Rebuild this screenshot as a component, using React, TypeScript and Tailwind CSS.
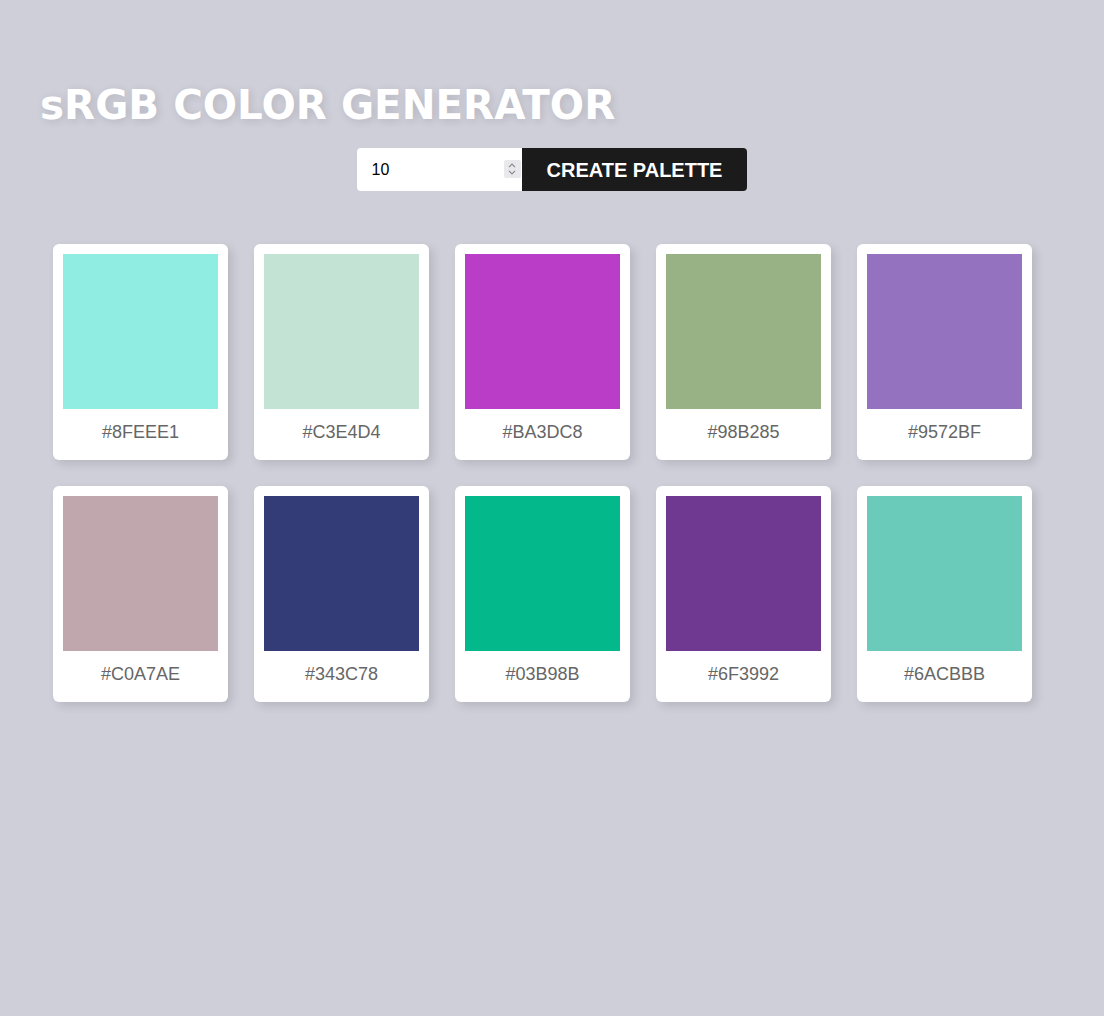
import React from 'react';

const colors = [
  '#8FEEE1',
  '#C3E4D4',
  '#BA3DC8',
  '#98B285',
  '#9572BF',
  '#C0A7AE',
  '#343C78',
  '#03B98B',
  '#6F3992',
  '#6ACBBB',
];

const ColorCard: React.FC<{ hex: string }> = ({ hex }) => (
  <div className="m-[13px] w-[175px] rounded-md bg-white px-[10px] pt-[10px] shadow-[4px_4px_10px_rgba(0,0,0,0.12)]">
    <div className="h-[155px] w-[155px]" style={{ backgroundColor: hex }} />
    <p className="h-[51px] pt-[12px] text-center text-[18px] leading-[22px] text-[#666]">{hex}</p>
  </div>
);

const App: React.FC = () => {
  return (
    <div className="min-h-[1016px] bg-[#cecfd9] px-10 pt-[80px] font-['Liberation_Sans',Arial,sans-serif]">
      <h1 className="font-['DejaVu_Sans',Verdana,sans-serif] text-[40.4px] font-bold leading-[50px] text-white [text-shadow:2px_2px_8px_rgba(0,0,0,0.12)]">
        sRGB COLOR GENERATOR
      </h1>
      <div className="mt-[18px] flex justify-center">
        <div className="relative">
          <input
            type="number"
            defaultValue={10}
            className="h-[43px] w-[165px] rounded-l-[4px] bg-white pl-[15px] pr-[16px] text-[16px] text-black outline-none [appearance:textfield] [&::-webkit-inner-spin-button]:appearance-none"
          />
          {/* spinner, drawn so it shows without hover */}
          <div className="pointer-events-none absolute right-[1px] top-[12px] flex h-[18px] w-[17px] flex-col items-center justify-center gap-[2px] rounded-[2px] bg-[#e9e9ed]">
            <svg width="8" height="5" viewBox="0 0 8 5" fill="none" stroke="#8a8a8a" strokeWidth="1.2">
              <path d="M1 4.2 4 1.2 7 4.2" />
            </svg>
            <svg width="8" height="5" viewBox="0 0 8 5" fill="none" stroke="#8a8a8a" strokeWidth="1.2">
              <path d="M1 0.8 4 3.8 7 0.8" />
            </svg>
          </div>
        </div>
        <button className="h-[43px] rounded-r-[4px] bg-[#1b1b1b] px-[25px] text-[20px] font-bold text-white">
          CREATE PALETTE
        </button>
      </div>
      <div className="mt-[40px] flex flex-wrap">
        {colors.map((c) => (
          <ColorCard key={c} hex={c} />
        ))}
      </div>
    </div>
  );
};

export default App;
